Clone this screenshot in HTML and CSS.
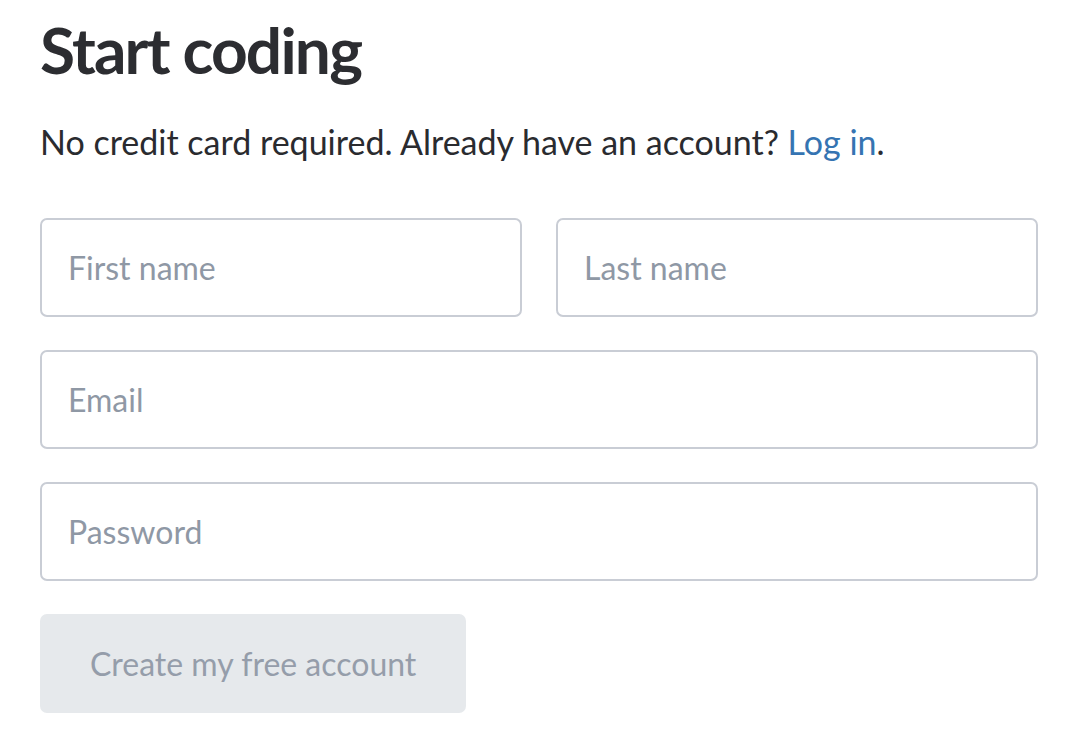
FILE: index.html
```html
<!DOCTYPE html>
<html>
<head>
<meta charset="utf-8">
<link rel="stylesheet" href="styles.css">
</head>
<body>
<div class="signup">
  <h1 class="title">Start coding</h1>
  <p class="lead">No credit card required. Already have an account? <a class="link" href="#">Log in</a>.</p>
  <form class="form">
    <div class="row">
      <input class="field" type="text" placeholder="First name">
      <input class="field" type="text" placeholder="Last name">
    </div>
    <input class="field" type="email" placeholder="Email">
    <input class="field" type="password" placeholder="Password">
    <div class="actions">
      <button class="submit" type="button" disabled>Create my free account</button>
    </div>
  </form>
</div>
</body>
</html>
```

FILE: styles.css
```css
html, body {
  margin: 0;
  padding: 0;
  background: #ffffff;
}
body {
  font-family: Lato, "Open Sans", sans-serif;
  color: #2a2b2f;
}
.signup {
  padding: 12px 32px 0 40px;
}
.title {
  margin: 0;
  font-size: 64px;
  font-weight: 700;
  line-height: 76px;
  color: #2c2d31;
  letter-spacing: -1.8px;
}
.lead {
  margin: 30px 0 0 0;
  font-size: 34px;
  line-height: 48px;
  color: #2a2b2f;
}
.link {
  color: #3574b2;
  text-decoration: none;
}
.form {
  margin-top: 52px;
  display: flex;
  flex-direction: column;
  gap: 33px;
}
.row {
  display: flex;
  gap: 34px;
}
.row .field {
  flex: 1 1 0;
  min-width: 0;
}
.field {
  box-sizing: border-box;
  height: 99px;
  margin: 0;
  padding: 0 26px;
  border: 2px solid #c9cdd5;
  border-radius: 7px;
  font-family: Lato, "Open Sans", sans-serif;
  font-size: 32px;
  color: #2a2b2f;
  background: #fff;
  outline: none;
}
.field::placeholder {
  color: #8f98a5;
  opacity: 1;
}
.actions {
  display: flex;
}
.submit {
  box-sizing: border-box;
  height: 99px;
  padding: 0 50px;
  border: none;
  border-radius: 7px;
  background: #e6e9ec;
  color: #959daa;
  font-family: Lato, "Open Sans", sans-serif;
  font-size: 32px;
  cursor: default;
}
```
